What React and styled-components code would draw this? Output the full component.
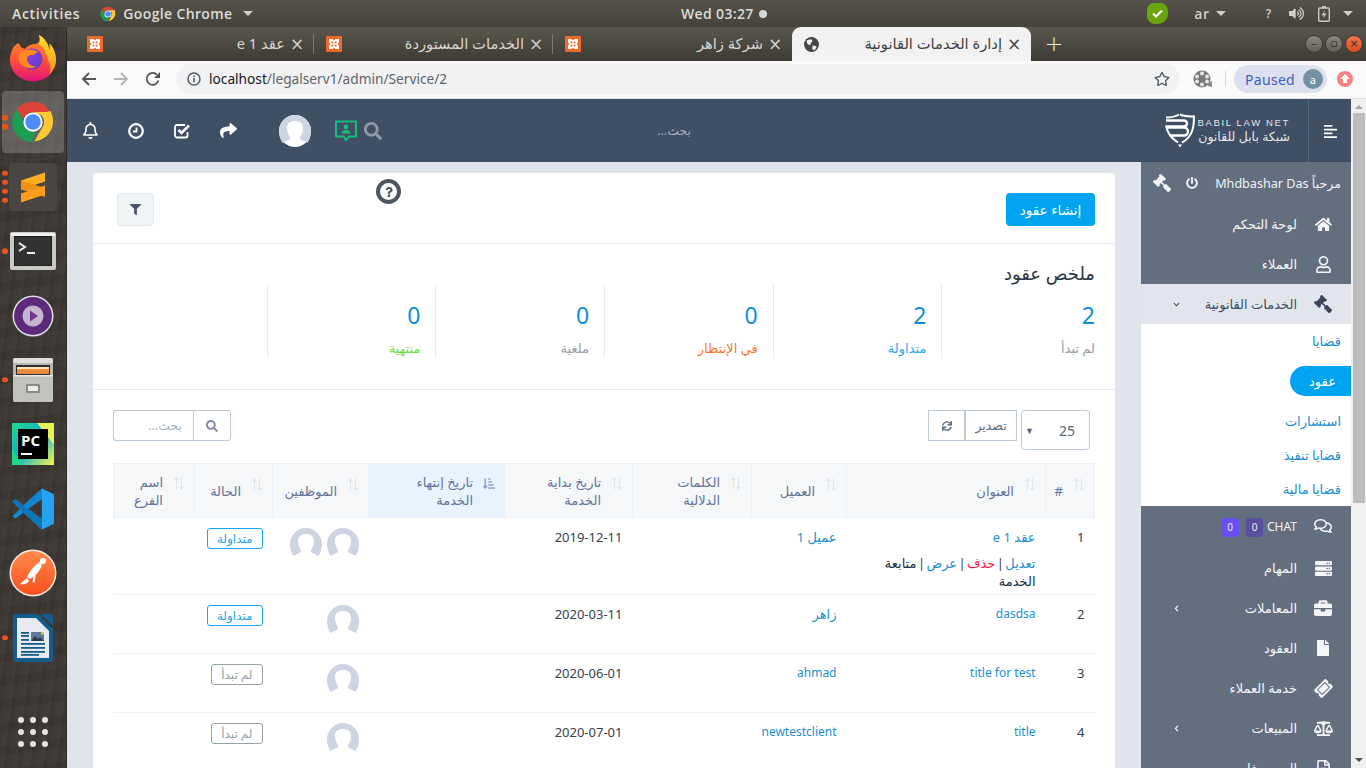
import React from 'react';
import styled, { createGlobalStyle } from 'styled-components';
import {
  FaHome, FaGavel, FaRegUser, FaRegComments, FaServer, FaBriefcase, FaFile, FaTicketAlt, FaBalanceScale,
  FaPowerOff, FaSearch, FaFilter, FaSync, FaRegBell, FaShare, FaAlignLeft,
  FaQuestion, FaChevronLeft, FaChevronDown, FaSortAmountDownAlt, FaVolumeUp, FaRegStar, FaRegFileAlt,
} from 'react-icons/fa';

const AR = `"Noto Sans", "DejaVu Sans", sans-serif`;

const Global = createGlobalStyle`
  html, body { margin: 0; padding: 0; width: 1366px; height: 768px; overflow: hidden; background: #3b3632; }
  * { box-sizing: border-box; }
  body { font-family: ${AR}; }
`;

const Screen = styled.div`
  width: 1366px; height: 768px; display: flex; flex-direction: column; overflow: hidden;
`;

/* ---------- GNOME top bar ---------- */
const TopBar = styled.div`
  height: 27px; flex: none; display: flex; align-items: center; color: #dcdcd8;
  background: linear-gradient(#57534b, #45423b);
  font: 600 14px "Open Sans", sans-serif; letter-spacing: .7px;
`;
const TopLeft = styled.div`flex: 0 0 681px; display: flex; align-items: center; padding-left: 12px;`;
const AppName = styled.span`margin: 0 6px 0 7px; letter-spacing: .35px;`;
const AppSlot = styled.span`margin-left: 20px; display: flex; align-items: center;`;
const Clock = styled.div`display: flex; align-items: center; gap: 5px; letter-spacing: .35px;`;
const ClockDot = styled.span`width: 8px; height: 8px; border-radius: 50%; background: #d8d8d8;`;
const TopRight = styled.div`margin-left: auto; display: flex; align-items: center; padding-right: 13px;`;
const Caret = styled.span`
  width: 0; height: 0; border-left: 5px solid transparent; border-right: 5px solid transparent;
  border-top: 5px solid #cfcfca; margin-left: ${p => p.$ml || 0}px;
`;
const Shield = styled.span`
  width: 21px; height: 21px; border-radius: 7px 8px 10px 8px; background: #6aa50f; display: flex;
  align-items: center; justify-content: center; margin-right: 26px;
`;
const Tray = styled.span`display: flex; align-items: center; margin-left: ${p => p.$ml || 0}px; font-size: ${p => p.$fs || 14}px; color: #cfcfca;`;

/* ---------- Dock ---------- */
const Body = styled.div`flex: 1; display: flex; min-height: 0;`;
const Dock = styled.div`
  width: 67px; flex: none; display: flex; flex-direction: column; align-items: center; position: relative;
  background:
    repeating-linear-gradient(97deg, rgba(255,255,255,.018) 0 3px, rgba(0,0,0,.03) 3px 7px, rgba(255,255,255,.012) 7px 13px),
    repeating-linear-gradient(172deg, rgba(0,0,0,.03) 0 9px, rgba(255,255,255,.014) 9px 23px),
    #3b3632;
  border-right: 1px solid #2f2b28;
`;
const DockItem = styled.div`
  width: 62px; height: 62px; margin-bottom: 2.4px; flex: none; display: flex; align-items: center; justify-content: center;
  position: relative; border-radius: 4px; background: ${p => p.$active ? 'rgba(255,255,255,.2)' : 'transparent'};
`;
const Dots = styled.div`
  position: absolute; left: 0; top: 50%; transform: translateY(-50%); display: flex; flex-direction: column; gap: 3.5px;
`;
const RunDot = styled.span`width: 5.5px; height: 5.5px; border-radius: 50%; background: #e95420;`;
const AppsGrid = styled.div`
  position: absolute; left: 18px; bottom: 21px; display: grid; grid-template-columns: repeat(3, 6px); gap: 6px;
`;
const AppsDot = styled.span`width: 6px; height: 6px; border-radius: 50%; background: #e6e4e0;`;

/* ---------- Chrome ---------- */
const Win = styled.div`flex: 1; min-width: 0; display: flex; flex-direction: column;`;
const TabStrip = styled.div`
  height: 34px; flex: none; display: flex; padding-left: 8px; align-items: stretch;
  background: linear-gradient(#5a574e, #3e3b35);
`;
const Tab = styled.div`
  width: 239px; flex: none; display: flex; align-items: center; padding: 0 8px 0 12px; position: relative; color: ${p => p.$active ? '#3c4043' : '#d8d6d0'};
  background: ${p => p.$active ? '#f2f2f2' : 'transparent'};
  border-radius: ${p => p.$active ? '9px 9px 0 0' : '0'};
  font-size: 14.7px;
  &::after {
    content: ''; position: absolute; right: 0; top: 7px; height: 20px; width: 1px;
    background: ${p => p.$sep ? '#7d7a70' : 'transparent'};
  }
`;
const TabTitle = styled.span`margin: -2px 0 0 auto; direction: rtl; white-space: nowrap;`;
const TabClose = styled.span`
  width: 18px; margin-left: 3px; text-align: center; font: 400 17px/1 "DejaVu Sans", sans-serif; opacity: .95;
`;
const NewTab = styled.span`
  margin-left: 10px; width: 26px; align-self: center; text-align: center; color: #eee; font: 300 22px/1 "DejaVu Sans", sans-serif;
`;
const WinBtns = styled.div`margin-left: auto; display: flex; align-items: center; gap: 2px; padding-right: 3px; margin-top: -1px;`;
const WinBtn = styled.span`
  width: 18px; height: 18px; border-radius: 50%; display: flex; align-items: center; justify-content: center;
  background: ${p => p.$close ? 'linear-gradient(#f2764c,#dd4a1f)' : 'linear-gradient(#8b8980,#5f5d55)'};
  border: 1px solid #3a3833; color: #2e2c28; font: 400 11px/1 "DejaVu Sans", sans-serif;
`;
const ToolBar = styled.div`
  height: 38px; flex: none; display: flex; align-items: center; padding-bottom: 1px; background: #fafafa; border-bottom: 1px solid #e4e1dd;
`;
const NavBtn = styled.span`width: 32px; display: flex; justify-content: center; flex: none;`;
const NavStart = styled.div`padding-left: 6px; display: flex;`;
const Omni = styled.div`
  margin-left: 7px; width: 1004px; height: 30px; border-radius: 15px; background: #f1f2f4; display: flex; align-items: center; padding: 0 10px 0 11px;
`;
const Url = styled.span`margin: -1px 0 0 8px; font: 400 13.7px "Noto Sans", sans-serif; color: #5f6368;`;
const UrlHost = styled.span`color: #202124;`;
const Star = styled.span`margin-left: auto; display: flex; color: #55585c; margin-right: 0;`;
const ExtSlot = styled.span`margin-left: 13px; display: flex;`;
const ToolSep = styled.span`width: 1px; height: 16px; background: #d6d6d6; margin: 0 8px 0 12px;`;
const Paused = styled.span`
  width: 93px; height: 28px; border-radius: 14px; background: #dce0ef; display: flex; align-items: center; justify-content: space-between; padding: 0 4px 0 11px;
  font: 400 14px "Noto Sans", sans-serif; color: #3f5cc8; letter-spacing: .3px;
`;
const Letter = styled.span`
  width: 20px; height: 20px; border-radius: 50%; background: #75909f; color: #fff; font-size: 11px; display: flex; align-items: center; justify-content: center;
`;
const Update = styled.span`
  width: 16px; height: 16px; margin-left: 10px; border-radius: 50%; background: #fa8080; display: flex; align-items: center; justify-content: center;
`;

/* ---------- Page ---------- */
const PageRow = styled.div`flex: 1; min-height: 0; display: flex;`;
const Page = styled.div`flex: 1; min-width: 0; display: flex; flex-direction: column; direction: rtl;`;
const Scrollbar = styled.div`
  width: 15px; flex: none; background: #f0f0f0; display: flex; flex-direction: column; align-items: center; position: relative;
`;
const ScrollUp = styled.span`
  margin-top: 6px; width: 0; height: 0; border-left: 4px solid transparent; border-right: 4px solid transparent; border-bottom: 4px solid #a5a5a5;
`;
const ScrollThumb = styled.span`margin-top: 4px; width: 12px; height: 390px; background: #bebebe;`;
const ScrollDown = styled.span`
  position: absolute; bottom: 6px; width: 0; height: 0; border-left: 4px solid transparent; border-right: 4px solid transparent; border-top: 4px solid #505050;
`;
const Header = styled.header`
  height: 63px; flex: none; display: flex; align-items: center; background: #3f4f65; color: #fff;
`;
const MenuBox = styled.div`
  width: 43px; height: 100%; flex: none; border-left: 1px solid #566578; display: flex; align-items: center; justify-content: center; padding-top: 1px;
`;
const Logo = styled.div`margin-right: 18px; width: 125px; display: flex; align-items: center; justify-content: space-between; direction: ltr; flex: none;`;
const LogoText = styled.div`display: flex; flex-direction: column; align-items: flex-end; gap: 1px;`;
const LogoLatin = styled.span`font: 400 9.5px "Liberation Sans", sans-serif; letter-spacing: 1.65px; color: #e4e7ec; white-space: nowrap;`;
const LogoArabic = styled.span`font-size: 12.5px; line-height: 15px; color: #e4e7ec; direction: rtl; white-space: nowrap;`;
const SearchHint = styled.span`margin-right: 474px; font-size: 12.5px; color: #a3aec1; white-space: nowrap;`;
const HeaderTools = styled.div`margin-right: auto; direction: ltr; display: flex; align-items: center; flex: none;`;
const HeadCell = styled.span`width: 46px; display: flex; justify-content: center;`;
const ToolSlot = styled.span`margin-left: ${p => p.$ml}px; display: flex; color: ${p => p.$color || 'inherit'};`;

const Below = styled.div`flex: 1; min-height: 0; display: flex; background: #e0e5ec;`;
const Sidebar = styled.aside`width: 210px; flex: none; background: #636e7f; color: #fff;`;
const Welcome = styled.div`
  height: 42px; display: flex; align-items: center; padding-right: 10px; font-size: 12.6px; color: #f2f3f5; white-space: nowrap;
`;
const WelcomeIcon = styled.span`display: flex; margin-right: ${p => p.$mr}px;`;
const Flip = styled.span`display: flex; transform: scaleX(-1);`;
const Tilt = styled.span`display: flex; transform: rotate(-45deg);`;
const NavItem = styled.div`
  height: ${p => p.$h || 40}px; display: flex; align-items: center; padding: 0 18px ${p => p.$pb || 0}px 0; font-size: 13px; white-space: nowrap;
  background: ${p => p.$open ? '#e2e6ec' : 'transparent'}; color: ${p => p.$open ? '#3f4f65' : '#f4f5f7'};
`;
const NavIcon = styled.span`width: 20px; flex: none; display: flex; justify-content: center; margin-left: 16px;`;
const NavChevron = styled.span`margin-right: auto; padding-left: 32px; display: flex;`;
const ChatLabel = styled.span`font-size: 12px; font-stretch: condensed;`;
const Sub = styled.div`background: #fff; height: 182px; display: flex; flex-direction: column; align-items: flex-start;`;
const SubItem = styled.a`
  height: ${p => p.$h}px; flex: none; display: flex; align-items: center; font-size: 13px; color: #1a8fd1; padding: ${p => p.$pt || 0}px 10px 0 0;
`;
const SubPill = styled.a`
  height: 30px; width: 61px; margin: 8px 0 4px; border-radius: 15px 0 0 15px; background: #00a4f1; color: #fff; font-size: 13px; flex: none;
  display: flex; align-items: center; justify-content: center; padding-left: 4px;
`;
const Badge = styled.span`
  width: ${p => p.$w}px; height: 19px; border-radius: 3px; background: ${p => p.$bg}; color: #e8e8f5; font: 400 10px "Noto Sans", sans-serif;
  display: flex; align-items: center; justify-content: center; margin-right: ${p => p.$mr}px; margin-top: 2px;
`;

const Content = styled.main`flex: 1; min-width: 0; padding: 11px 26px 0;`;
const Card = styled.div`background: #fff; border-radius: 4px 4px 0 0; position: relative; height: 640px; overflow: hidden;`;
const CardTop = styled.div`
  height: 71px; display: flex; align-items: flex-start; justify-content: space-between; padding: 20px 20px 0 24px; border-bottom: 1px solid #e8eaed;
`;
const PrimaryBtn = styled.button`
  width: 89px; height: 33px; border: 0; border-radius: 4px; background: #00a4f1; color: #fff; font: 400 13.5px ${AR}; padding: 0;
`;
const FilterBtn = styled.button`
  width: 37px; height: 33px; border: 1px solid #e4e9ee; border-radius: 4px; background: #f0f4f7; display: flex; align-items: center; justify-content: center; padding: 0;
`;
const HelpBadge = styled.span`
  position: absolute; left: 283px; top: 6px; width: 25px; height: 25px; border-radius: 50%; background: #fff; border: 4px solid #4d5562;
  display: flex; align-items: center; justify-content: center;
`;
const Summary = styled.section`height: 146px; padding: 20px 20px 0; border-bottom: 1px solid #e8eaed;`;
const SummaryTitle = styled.h2`margin: 0; height: 19px; font: 400 18px/19px ${AR}; color: #2c3440;`;
const StatsRow = styled.div`display: grid; grid-template-columns: repeat(6, 168.67px); height: 74px; margin: 1px -15px 0; width: 1012px;`;
const Stat = styled.div`padding: 17px 15px 0; border-left: ${p => p.$last ? 'none' : '1px solid #e9ebee'};`;
const StatNum = styled.div`font: 400 23px/28px "Noto Sans", sans-serif; color: #0f8fd6; height: 30px;`;
const StatLabel = styled.div`font-size: 13px; line-height: 17px; margin-top: 9px; color: ${p => p.$c}; white-space: nowrap;`;

const TableTools = styled.div`display: flex; justify-content: flex-start; align-items: flex-start; padding: 20px 20px 0; height: 73px;`;
const PageSize = styled.div`
  width: 69px; height: 40px; border: 1px solid #bcc9d8; border-radius: 4px; display: flex; align-items: center; justify-content: space-between; padding: 0 14px 0 3px;
  margin-right: 5px; color: #59667c; font: 400 14px "Noto Sans", sans-serif;
`;
const PageArrow = styled.span`font-size: 9px;`;
const ExportGroup = styled.div`display: flex; margin-right: 5px; height: 31px;`;
const ExportBtn = styled.span`
  width: ${p => p.$w}px; height: 31px; border: 1px solid #bcc9d8; display: flex; align-items: center; justify-content: center; font-size: 12.5px; color: #5d6b85;
  margin-right: ${p => p.$joined ? '-1px' : '0'};
`;
const SearchGroup = styled.div`display: flex; margin-right: auto; height: 31px;`;
const SearchBtn = styled.span`
  width: 38px; height: 31px; border: 1px solid #bcc9d8; display: flex; align-items: center; justify-content: center; border-radius: 0 3px 3px 0;
`;
const SearchField = styled.span`
  width: 80px; height: 31px; border: 1px solid #bcc9d8; border-right: 0; border-radius: 3px 0 0 3px; display: flex; align-items: center; padding-right: 11px; font-size: 12.5px; color: #a9b4c4;
`;
const Table = styled.table`
  width: 981px; margin: 0 20px; border-collapse: collapse; table-layout: fixed; font-size: 12px;
`;
const Col = styled.col`width: ${p => p.$w}px;`;
const Th = styled.th`
  height: 54px; padding: 0; background: ${p => p.$sorted ? '#e8f3fd' : '#f5f7f9'}; border: 1px solid #e8f1fa; color: #64739a; font-weight: 400; font-size: 13px; line-height: 18px; vertical-align: middle; text-align: right;
`;
const ThInner = styled.div`display: flex; align-items: flex-start; padding: 0 9px 0 10px;`;
const SortSlot = styled.span`flex: none; width: 12px; display: flex; margin-left: 10px; margin-top: ${p => p.$mt}px;`;
const ThText = styled.span`display: block;`;
const Td = styled.td`
  padding: 10px 10px 0; vertical-align: top; color: #37404e; border-bottom: 1px solid #e9f1fa; height: ${p => p.$h}px; line-height: 18px; font-family: "Noto Sans", "DejaVu Sans", sans-serif;
  font-size: ${p => p.$fs || 12}px;
`;
const CellLink = styled.a`color: #1a8fd1; font-size: ${p => p.$ar ? 13 : 12}px;`;
const RowActions = styled.div`margin-top: 7px; line-height: 18px; font-size: 13px; word-spacing: -2px; color: #37404e;`;
const ActionLink = styled.a`color: ${p => p.$c};`;
const Avatars = styled.div`display: flex; gap: 5px; justify-content: flex-start;`;
const Status = styled.span`
  display: inline-flex; height: 21px; padding: 0 9px; align-items: center; border-radius: 3px; font-size: 12px; line-height: 1;
  border: 1px solid ${p => p.$c}; color: ${p => p.$c};
`;

/* ---------- Drawings ---------- */
const Chrome = ({ s = 44 }) => (
  <svg width={s} height={s} viewBox="0 0 48 48">
    <path d="M24 2a22 22 0 0 1 19 11H24a11 11 0 0 0-10.4 7.4L6.3 10A22 22 0 0 1 24 2z" fill="#db4437" />
    <path d="M43 13a22 22 0 0 1-17.6 32.9L35 29.5A11 11 0 0 0 31.5 16z" fill="#fcc934" transform="translate(0 -1)" />
    <path d="M6.3 10l9.6 16.8A11 11 0 0 0 26 34.8l-2.6 11.2-.4 0A22 22 0 0 1 6.3 10z" fill="#1e9e54" />
    <path d="M24 13h19a22 22 0 0 1 1 3H31z" fill="#fcc934" />
    <circle cx="24" cy="24" r="10.5" fill="#fff" />
    <circle cx="24" cy="24" r="8.4" fill="#4c8bf5" />
  </svg>
);
const Firefox = () => (
  <svg width="46" height="47" viewBox="0 0 46 47">
    <defs>
      <linearGradient id="ffa" x1="0" y1="0" x2="0" y2="1"><stop offset="0" stopColor="#ff9a1f" /><stop offset=".55" stopColor="#ff4f3a" /><stop offset="1" stopColor="#e0127c" /></linearGradient>
      <linearGradient id="ffb" x1="0" y1="0" x2="0" y2="1"><stop offset="0" stopColor="#ffe226" /><stop offset="1" stopColor="#ff8f1f" /></linearGradient>
      <linearGradient id="ffc" x1="0" y1="0" x2="1" y2="1"><stop offset="0" stopColor="#a13de0" /><stop offset="1" stopColor="#5a3cc8" /></linearGradient>
    </defs>
    <path d="M3 13c-3 6-3 10-3 12a23 21.500 0 0 0 46 0c0-7-3-13-6-16-1-1 .5 5-1 6 0-6-4-12-10-15 2 6 0 8-3 9-5 0-9 2-11 5-3-1-5-2-6-6-3 1-5 3-6 5z" fill="url(#ffa)" />
    <path d="M29 0c5 3 10 9 10 15 1.500-1 0-7 1-6 3 3 6 9 6 16 0 6-3 11-7 15 2-4 2-10-1-15C36 18 34 12 29 9c1-3 1-6 0-9z" fill="url(#ffb)" />
    <circle cx="22" cy="24" r="10.500" fill="url(#ffc)" />
    <path d="M10 18c5-4 13-4 18-1l-5 3c-4 0-6 1-6 4 0 5 5 8 10 7-4 3-12 3-16-2-3-3-3-8-1-11z" fill="#ff8a1e" />
  </svg>
);
const Sublime = () => (
  <svg width="48" height="48" viewBox="0 0 48 48">
    <rect width="48" height="48" rx="4" fill="#4a4643" />
    <path d="M12 17.500 36 9.500v9l-24 8z" fill="#ffae22" />
    <path d="M12 17.500v9l24 7.500v-9z" fill="#f08f17" />
    <path d="M12 30.500 36 22.500v9l-24 8z" fill="#ff9d1c" />
  </svg>
);
const Terminal = () => (
  <svg width="46" height="38" viewBox="0 0 46 38">
    <rect width="46" height="38" rx="2" fill="#c9c9c6" />
    <rect x="1" y="1" width="44" height="3" fill="#efefec" />
    <rect x="4" y="4" width="38" height="30" fill="#1d1d1d" />
    <rect x="5" y="5" width="36" height="28" fill="#333" />
    <path d="M9 11l6 4-6 4" fill="none" stroke="#f2f2f2" strokeWidth="2" />
    <path d="M17 21h8" stroke="#f2f2f2" strokeWidth="2" />
  </svg>
);
const VideoPlayer = () => (
  <svg width="42" height="42" viewBox="0 0 42 42">
    <circle cx="21" cy="21" r="20.500" fill="#e6e3e8" />
    <circle cx="21" cy="21" r="19" fill="#5c2a79" />
    <circle cx="21" cy="21" r="10.500" fill="#c5b5d0" />
    <path d="M18 15.500l8 5.500-8 5.500z" fill="#6c3a8c" />
  </svg>
);
const Files = () => (
  <svg width="42" height="44" viewBox="0 0 42 44">
    <rect x="1" width="40" height="44" rx="3" fill="#b8b8b5" />
    <rect x="1" width="40" height="5" rx="2" fill="#dededb" />
    <rect x="4" y="7" width="34" height="11" fill="#2e2e2e" />
    <rect x="5" y="9" width="32" height="7" fill="#f08a3c" />
    <rect x="5" y="9" width="32" height="2" fill="#fde0b4" />
    <rect x="1" y="17" width="40" height="27" rx="2" fill="#c2c2bf" />
    <rect x="1" y="17" width="40" height="1.500" fill="#e8e8e5" />
    <rect x="14" y="26" width="14" height="9" rx="1" fill="#8a8a87" />
    <rect x="16" y="28" width="10" height="5" fill="#ececea" />
  </svg>
);
const PyCharm = () => (
  <svg width="42" height="42" viewBox="0 0 42 42">
    <defs>
      <linearGradient id="pc" x1="0" y1="0" x2="1" y2="1"><stop offset="0" stopColor="#21d789" /><stop offset=".5" stopColor="#12b0c8" /><stop offset="1" stopColor="#fcf84a" /></linearGradient>
    </defs>
    <rect width="42" height="42" fill="url(#pc)" />
    <path d="M25 0h17v22z" fill="#fcf84a" opacity=".9" />
    <path d="M0 26l10 16H0z" fill="#21d789" />
    <rect x="6" y="6" width="30" height="30" fill="#000" />
    <text x="9" y="23" fontFamily="Open Sans, sans-serif" fontWeight="700" fontSize="15" fill="#fff">PC</text>
    <rect x="9" y="30" width="11" height="2" fill="#fff" />
  </svg>
);
const VSCode = () => (
  <svg width="42" height="42" viewBox="0 0 100 100">
    <path d="M71 99l26-12.500a6 6 0 0 0 3-5.500V19a6 6 0 0 0-3-5.500L71 1 27 41 8 27l-7 6 18 17L1 67l7 6 19-14z" fill="#1287cf" />
    <path d="M71 99l26-12.500a6 6 0 0 0 3-5.500V19a6 6 0 0 0-3-5.500L71 1z" fill="#26a2f1" />
    <path d="M71 27 38 50l33 23z" fill="#3b3632" />
    <path d="M1 33 71 99V73L8 27z" fill="#0f75b8" />
  </svg>
);
const Postman = () => (
  <svg width="48" height="48" viewBox="0 0 48 48">
    <defs><linearGradient id="pm" x1="0" y1="0" x2="0" y2="1"><stop offset="0" stopColor="#ff8a4a" /><stop offset="1" stopColor="#fa4f1e" /></linearGradient></defs>
    <circle cx="24" cy="24" r="23.500" fill="#f4ece6" />
    <circle cx="24" cy="24" r="22" fill="url(#pm)" />
    <circle cx="34" cy="12" r="3" fill="#fff" />
    <path d="M31 13c-4 2-10 8-13 15l3 2c5-3 10-8 12-14z" fill="#fff" />
    <path d="M18 29l-7 6c3 1 7 0 9-3z" fill="#fff" />
    <path d="M25 25l-1.500 8 2 .8 1.500-10.500z" fill="#fff" />
  </svg>
);
const Writer = () => (
  <svg width="40" height="48" viewBox="0 0 40 48">
    <path d="M3 0h22l15 15v30a3 3 0 0 1-3 3H3a3 3 0 0 1-3-3V3a3 3 0 0 1 3-3z" fill="#125d8c" />
    <path d="M28 0h10a2 2 0 0 1 2 2v10z" fill="#125d8c" />
    <path d="M4 4h19l13 13v27H4z" fill="#e7eaf0" />
    <rect x="18" y="18" width="13" height="9" fill="#5e7b95" />
    <path d="M18 27l4-5 3 3 2-2 4 4z" fill="#2b3c4a" />
    <rect x="28" y="18" width="3" height="2.500" fill="#e6c33e" />
    {[18, 21].map(y => <rect key={y} x="8" y={y} width="8" height="1.800" fill="#125d8c" />)}
    <rect x="8" y="25" width="8" height="1.800" fill="#125d8c" />
    {[29, 33, 37].map(y => <rect key={y} x="8" y={y} width="24" height="1.800" fill="#125d8c" />)}
    <rect x="8" y="40" width="18" height="1.800" fill="#125d8c" />
  </svg>
);
const Xampp = () => (
  <svg width="16" height="16" viewBox="0 0 16 16">
    <rect width="16" height="16" rx="1" fill="#ef6a27" />
    <path d="M3 3h3.500L8 4.500 9.500 3H13v3.500L11.500 8 13 9.500V13H9.500L8 11.500 6.500 13H3V9.500L4.500 8 3 6.500z" fill="#fff" />
    <rect x="5.500" y="5.500" width="1.800" height="1.800" fill="#ef6a27" />
    <rect x="8.700" y="5.500" width="1.800" height="1.800" fill="#ef6a27" />
    <rect x="5.500" y="8.700" width="1.800" height="1.800" fill="#ef6a27" />
    <rect x="8.700" y="8.700" width="1.800" height="1.800" fill="#ef6a27" />
  </svg>
);
const Globe = () => (
  <svg width="15" height="15" viewBox="0 0 16 16">
    <circle cx="8" cy="8" r="8" fill="#45474a" />
    <path d="M3 3.500c2-1 4-1 5.500-.5L9 5 7 6.500 7.500 8 5 8.500 3 6zM9 9l3.500.5L13.500 11 11 14 9 13z" fill="#f2f2f2" />
  </svg>
);
const Reel = () => (
  <svg width="20" height="20" viewBox="0 0 20 20">
    <circle cx="9" cy="10" r="8.500" fill="#7a7a7a" />
    {[[9, 4.500], [9, 15.500], [4, 7.500], [14, 7.500], [4, 12.500], [14, 12.500]].map(([x, y]) => <circle key={`${x}${y}`} cx={x} cy={y} r="2" fill="#e9e9e9" />)}
    <path d="M15 14l4-2v6l-4-1z" fill="#8a8a8a" />
  </svg>
);
const Avatar = () => (
  <svg width="32" height="32" viewBox="0 0 32 32">
    <circle cx="16" cy="16" r="16" fill="#fff" />
    <path d="M16 0a16 16 0 0 1 16 16c0 4.500-1.200 8.500-3.500 12-2.500-1.500-5.500-2.500-7-3.500-.8-.6-.7-2 .2-3.500 1.500-2.500 2.300-5 2.300-8 0-4.500-3-7-8-7s-8 2.500-8 7c0 3 .8 5.500 2.300 8 .9 1.500 1 2.900.2 3.500C9 25.500 6 26.500 3.500 28 1.200 24.500 0 20.500 0 16A16 16 0 0 1 16 0z" fill="#cfd4e3" />
  </svg>
);
const ChatUser = () => (
  <svg width="24" height="24" viewBox="0 0 24 24" fill="none">
    <path d="M2 2.500h20v15h-7l-3 4-2-4H2z" stroke="#14bd7c" strokeWidth="2" strokeLinejoin="round" />
    <circle cx="12" cy="8" r="2.400" fill="#14bd7c" />
    <path d="M7.500 14.500c.4-2.600 2-3.500 4.500-3.500s4.100.9 4.500 3.500z" fill="#14bd7c" />
  </svg>
);
const ClockIcon = () => (
  <svg width="16" height="16" viewBox="0 0 16 16" fill="none">
    <circle cx="8" cy="8" r="6.800" stroke="#fff" strokeWidth="2.200" />
    <path d="M8.500 4.500v4H5" stroke="#fff" strokeWidth="1.800" />
  </svg>
);
const CheckIcon = () => (
  <svg width="17" height="16" viewBox="0 0 17 16" fill="none">
    <path d="M13.500 9v3.500a2 2 0 0 1-2 2H3a2 2 0 0 1-2-2V4a2 2 0 0 1 2-2h8" stroke="#fff" strokeWidth="1.800" />
    <path d="M4.500 7l3 3 7.500-7.500" stroke="#fff" strokeWidth="2.600" />
  </svg>
);
const LogoMark = () => (
  <svg width="30" height="35" viewBox="0 0 30 34" fill="none">
    <path d="M15 1c4 2 9 2 14 2 0 10-1 20-12 26" stroke="#fff" strokeWidth="2" />
    <path d="M13 29C5 24 2 18 1 12" stroke="#fff" strokeWidth="2" />
    <path d="M1 7h18a3 3 0 0 1 0 6H1M1 14h18a4 4 0 0 1 0 8H5" stroke="#fff" strokeWidth="2.400" />
    <path d="M1 4c4 0 8 0 13-3" stroke="#fff" strokeWidth="2" />
    <path d="M13 31h4l-2 3z" fill="#fff" />
  </svg>
);
const Sort = () => (
  <svg width="12" height="13" viewBox="0 0 12 13" fill="#e1e6ee">
    <path d="M3 13V3H1l2.500-3L6 3H4v10zM8 0h1v10h2l-2.500 3L6 10h2z" />
  </svg>
);
const Battery = () => (
  <svg width="12" height="16" viewBox="0 0 12 16" fill="none">
    <rect x=".7" y="2" width="10.600" height="13.300" rx="1" stroke="#c9c9c5" strokeWidth="1.400" />
    <rect x="4" y="0" width="4" height="2" fill="#c9c9c5" />
    <path d="M7 4 3.500 9.500H6L5 13l3.500-5.500H6z" fill="#c9c9c5" />
  </svg>
);
const Arrow = ({ dir, color }) => (
  <svg width="16" height="16" viewBox="0 0 16 16" fill="none" stroke={color} strokeWidth="1.800">
    {dir === 'left' ? <path d="M15 8H2M8 2 2 8l6 6" /> : <path d="M1 8h13M8 2l6 6-6 6" />}
  </svg>
);
const Reload = () => (
  <svg width="16" height="16" viewBox="0 0 16 16" fill="none">
    <path d="M13.500 9.500A6 6 0 1 1 12 3.600" stroke="#555" strokeWidth="1.800" />
    <path d="M15 1v6H9z" fill="#555" />
  </svg>
);
const Info = () => (
  <svg width="14" height="14" viewBox="0 0 14 14" fill="none">
    <circle cx="7" cy="7" r="6" stroke="#5a5d61" strokeWidth="1.500" />
    <rect x="6.200" y="6" width="1.600" height="4.500" fill="#5a5d61" />
    <rect x="6.200" y="3.500" width="1.600" height="1.600" fill="#5a5d61" />
  </svg>
);

const columns = [49, 199, 95, 119, 128, 136, 96, 78, 81];
const dockApps = [
  { c: <Firefox /> },
  { c: <Chrome />, active: true, dots: 2 },
  { c: <Sublime />, dots: 4 },
  { c: <Terminal />, dots: 1 },
  { c: <VideoPlayer /> },
  { c: <Files />, dots: 1 },
  { c: <PyCharm /> },
  { c: <VSCode /> },
  { c: <Postman /> },
  { c: <Writer />, dots: 1 },
];
const tabs = [
  { title: 'عقد 1 e', sep: true, icon: <Xampp /> },
  { title: 'الخدمات المستوردة', sep: true, icon: <Xampp /> },
  { title: 'شركة زاهر', icon: <Xampp /> },
  { title: 'إدارة الخدمات القانونية', active: true, icon: <Globe /> },
];
const stats = [
  { n: 2, l: 'لم تبدأ', c: '#9aa0a8' },
  { n: 2, l: 'متداولة', c: '#2ea8ef' },
  { n: 0, l: 'في الإنتظار', c: '#f5782a' },
  { n: 0, l: 'ملغية', c: '#9aa0a8' },
  { n: 0, l: 'منتهية', c: '#6fdc4a' },
];
const heads = [
  { t: '#', mt: -4 },
  { t: 'العنوان', mt: -4 },
  { t: 'العميل', mt: -4 },
  { t: 'الكلمات الدلالية', mt: 4 },
  { t: 'تاريخ بداية الخدمة', mt: 4 },
  { t: 'تاريخ إنتهاء الخدمة', mt: 4, sorted: true },
  { t: 'الموظفين', mt: -4 },
  { t: 'الحالة', mt: -4 },
  { t: 'اسم الفرع', mt: 4 },
];
const rows = [
  { n: 1, title: 'عقد 1 e', ar: true, client: 'عميل 1', cAr: true, date: '2019-12-11', people: 2, status: 'متداولة', c: '#1ba4ee', h: 77, actions: true },
  { n: 2, title: 'dasdsa', client: 'زاهر', cAr: true, date: '2020-03-11', people: 1, status: 'متداولة', c: '#1ba4ee', h: 59 },
  { n: 3, title: 'title for test', client: 'ahmad', date: '2020-06-01', people: 1, status: 'لم تبدأ', c: '#9aa0a8', h: 59 },
  { n: 4, title: 'title', client: 'newtestclient', date: '2020-07-01', people: 1, status: 'لم تبدأ', c: '#9aa0a8', h: 59 },
];

export default function App() {
  return (
    <>
      <Global />
      <Screen>
        <TopBar>
          <TopLeft>
            <span>Activities</span>
            <AppSlot><Chrome s={16} /></AppSlot>
            <AppName>Google Chrome</AppName>
            <Caret $ml={5} />
          </TopLeft>
          <Clock>Wed 03:27<ClockDot /></Clock>
          <TopRight>
            <Shield><svg width="11" height="9" viewBox="0 0 11 9" fill="none"><path d="M1 4.500l3 3 6-6" stroke="#fff" strokeWidth="2" /></svg></Shield>
            <Tray>ar</Tray>
            <Caret $ml={6} />
            <Tray $fs={12} $ml={40}>?</Tray>
            <Tray $ml={17}><FaVolumeUp size={15} /></Tray>
            <Tray $ml={14}><Battery /></Tray>
            <Caret $ml={13} />
          </TopRight>
        </TopBar>
        <Body>
          <Dock>
            {dockApps.map((a, i) => (
              <DockItem key={i} $active={a.active}>
                {a.dots && <Dots>{Array.from({ length: a.dots }).map((_, d) => <RunDot key={d} />)}</Dots>}
                {a.c}
              </DockItem>
            ))}
            <AppsGrid>{Array.from({ length: 9 }).map((_, i) => <AppsDot key={i} />)}</AppsGrid>
          </Dock>
          <Win>
            <TabStrip>
              {tabs.map(t => (
                <Tab key={t.title} $active={t.active} $sep={t.sep}>
                  {t.icon}
                  <TabTitle>{t.title}</TabTitle>
                  <TabClose>×</TabClose>
                </Tab>
              ))}
              <NewTab>+</NewTab>
              <WinBtns>
                <WinBtn>–</WinBtn>
                <WinBtn>▫</WinBtn>
                <WinBtn $close>×</WinBtn>
              </WinBtns>
            </TabStrip>
            <ToolBar>
              <NavStart>
                <NavBtn><Arrow dir="left" color="#555" /></NavBtn>
                <NavBtn><Arrow dir="right" color="#b4b4b4" /></NavBtn>
                <NavBtn><Reload /></NavBtn>
              </NavStart>
              <Omni>
                <Info />
                <Url><UrlHost>localhost</UrlHost>/legalserv1/admin/Service/2</Url>
                <Star><FaRegStar size={16} /></Star>
              </Omni>
              <ExtSlot><Reel /></ExtSlot>
              <ToolSep />
              <Paused>Paused<Letter>a</Letter></Paused>
              <Update><svg width="10" height="10" viewBox="0 0 10 10"><path d="M5 0l5 5H7v4H3V5H0z" fill="#fff" /></svg></Update>
            </ToolBar>
            <PageRow>
              <Page dir="rtl">
                <Header>
                  <MenuBox><FaAlignLeft size={15} color="#fff" /></MenuBox>
                  <Logo>
                    <LogoMark />
                    <LogoText>
                      <LogoLatin>BABIL LAW NET</LogoLatin>
                      <LogoArabic>شبكة بابل للقانون</LogoArabic>
                    </LogoText>
                  </Logo>
                  <SearchHint>بحث...</SearchHint>
                  <HeaderTools>
                    <HeadCell><FaRegBell size={17} /></HeadCell>
                    <HeadCell><ClockIcon /></HeadCell>
                    <HeadCell><CheckIcon /></HeadCell>
                    <HeadCell><FaShare size={17} /></HeadCell>
                    <ToolSlot $ml={28}><Avatar /></ToolSlot>
                    <ToolSlot $ml={23}><ChatUser /></ToolSlot>
                    <ToolSlot $ml={6} $color="#8e99a8"><FaSearch size={18} /></ToolSlot>
                  </HeaderTools>
                </Header>
                <Below>
                  <Sidebar>
                    <Welcome>
                      مرحباً Mhdbashar Das
                      <WelcomeIcon $mr={17}><FaPowerOff size={12} /></WelcomeIcon>
                      <WelcomeIcon $mr={15}><Flip><FaGavel size={18} /></Flip></WelcomeIcon>
                    </Welcome>
                    <NavItem><NavIcon><FaHome size={17} /></NavIcon>لوحة التحكم</NavItem>
                    <NavItem><NavIcon><FaRegUser size={17} /></NavIcon>العملاء</NavItem>
                    <NavItem $open>
                      <NavIcon><Flip><FaGavel size={18} color="#3a4658" /></Flip></NavIcon>الخدمات القانونية
                      <NavChevron><FaChevronDown size={7} /></NavChevron>
                    </NavItem>
                    <Sub>
                      <SubItem $h={34}>قضايا</SubItem>
                      <SubPill>عقود</SubPill>
                      <SubItem $h={42}>استشارات</SubItem>
                      <SubItem $h={26}>قضايا تنفيذ</SubItem>
                      <SubItem $h={38} $pt={4}>قضايا مالية</SubItem>
                    </Sub>
                    <NavItem $h={42} $pb={2}>
                      <NavIcon><FaRegComments size={18} /></NavIcon><ChatLabel>CHAT</ChatLabel>
                      <Badge $w={17} $bg="#5b509f" $mr={4}>0</Badge>
                      <Badge $w={18} $bg="#6a4ff0" $mr={7}>0</Badge>
                    </NavItem>
                    <NavItem><NavIcon><FaServer size={17} /></NavIcon>المهام</NavItem>
                    <NavItem>
                      <NavIcon><FaBriefcase size={18} /></NavIcon>المعاملات
                      <NavChevron><FaChevronLeft size={7} /></NavChevron>
                    </NavItem>
                    <NavItem><NavIcon><FaFile size={16} /></NavIcon>العقود</NavItem>
                    <NavItem><NavIcon><Tilt><FaTicketAlt size={17} /></Tilt></NavIcon>خدمة العملاء</NavItem>
                    <NavItem>
                      <NavIcon><FaBalanceScale size={19} /></NavIcon>المبيعات
                      <NavChevron><FaChevronLeft size={7} /></NavChevron>
                    </NavItem>
                    <NavItem><NavIcon><FaRegFileAlt size={17} /></NavIcon>المصروفات</NavItem>
                  </Sidebar>
                  <Content>
                    <Card>
                      <CardTop>
                        <PrimaryBtn>إنشاء عقود</PrimaryBtn>
                        <FilterBtn><FaFilter size={11} color="#4a5568" /></FilterBtn>
                      </CardTop>
                      <HelpBadge><FaQuestion size={10} color="#4d5562" /></HelpBadge>
                      <Summary>
                        <SummaryTitle>ملخص عقود</SummaryTitle>
                        <StatsRow>
                          {stats.map((s, i) => (
                            <Stat key={i}>
                              <StatNum>{s.n}</StatNum>
                              <StatLabel $c={s.c}>{s.l}</StatLabel>
                            </Stat>
                          ))}
                          <Stat $last />
                        </StatsRow>
                      </Summary>
                      <TableTools>
                        <PageSize>25<PageArrow>▼</PageArrow></PageSize>
                        <ExportGroup>
                          <ExportBtn $w={52} $joined>تصدير</ExportBtn>
                          <ExportBtn $w={37}><FaSync size={10} color="#5d6b85" /></ExportBtn>
                        </ExportGroup>
                        <SearchGroup>
                          <SearchBtn><FaSearch size={12} color="#7d8aa0" /></SearchBtn>
                          <SearchField>بحث...</SearchField>
                        </SearchGroup>
                      </TableTools>
                      <Table>
                        <colgroup>{columns.map((w, i) => <Col key={i} $w={w} />)}</colgroup>
                        <thead>
                          <tr>
                            {heads.map(h => (
                              <Th key={h.t} $sorted={h.sorted}>
                                <ThInner>
                                  <SortSlot $mt={h.mt}>{h.sorted ? <FaSortAmountDownAlt size={13} color="#8aa0c0" /> : <Sort />}</SortSlot>
                                  <ThText>{h.t}</ThText>
                                </ThInner>
                              </Th>
                            ))}
                          </tr>
                        </thead>
                        <tbody>
                          {rows.map(r => (
                            <tr key={r.n}>
                              <Td $h={r.h} $fs={13}>{r.n}</Td>
                              <Td $h={r.h}>
                                <CellLink $ar={r.ar}>{r.title}</CellLink>
                                {r.actions && (
                                  <RowActions>
                                    <ActionLink $c="#1a8fd1">تعديل</ActionLink> | <ActionLink $c="#f01a4a">حذف</ActionLink> | <ActionLink $c="#1a8fd1">عرض</ActionLink> | <ActionLink $c="#20303f">متابعة</ActionLink>
                                    <br />
                                    <ActionLink $c="#20303f">الخدمة</ActionLink>
                                  </RowActions>
                                )}
                              </Td>
                              <Td $h={r.h}><CellLink $ar={r.cAr}>{r.client}</CellLink></Td>
                              <Td $h={r.h} />
                              <Td $h={r.h} $fs={13}><bdi>{r.date}</bdi></Td>
                              <Td $h={r.h} />
                              <Td $h={r.h}>
                                <Avatars>{Array.from({ length: r.people }).map((_, i) => <Avatar key={i} />)}</Avatars>
                              </Td>
                              <Td $h={r.h}><Status $c={r.c}>{r.status}</Status></Td>
                              <Td $h={r.h} />
                            </tr>
                          ))}
                        </tbody>
                      </Table>
                    </Card>
                  </Content>
                </Below>
              </Page>
              <Scrollbar>
                <ScrollUp />
                <ScrollThumb />
                <ScrollDown />
              </Scrollbar>
            </PageRow>
          </Win>
        </Body>
      </Screen>
    </>
  );
}
